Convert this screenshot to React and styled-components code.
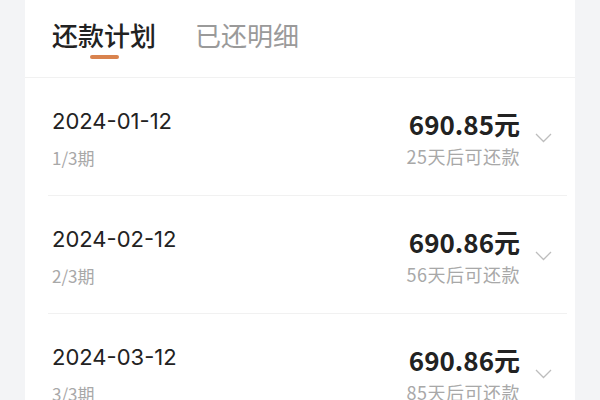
import React, { useState } from "react";
import styled, { createGlobalStyle } from "styled-components";

const GlobalStyle = createGlobalStyle`
  html, body {
    margin: 0;
    padding: 0;
    background: #f3f4f6;
    font-family: "Noto Sans CJK SC", "Noto Sans", sans-serif;
  }
`;

const Page = styled.div`
  width: 600px;
  height: 400px;
  overflow: hidden;
  padding: 0 25px;
  box-sizing: border-box;
`;

const Card = styled.div`
  background: #fff;
  height: 100%;
`;

const TabBar = styled.div`
  height: 78px;
  box-sizing: border-box;
  display: flex;
  gap: 39px;
  padding: 18px 0 0 27px;
  border-bottom: 1px solid #f1f1f1;
`;

const Tab = styled.div`
  display: flex;
  flex-direction: column;
  align-items: center;
  cursor: pointer;
  font-size: 26px;
  line-height: 34px;
  font-weight: ${({ active }) => (active ? 500 : 400)};
  color: ${({ active }) => (active ? "#222" : "#9a9a9a")};

  &::after {
    content: "";
    width: 29px;
    height: 4px;
    border-radius: 2px;
    margin-top: 3px;
    background: ${({ active }) => (active ? "#d9834e" : "transparent")};
  }
`;

const List = styled.div`
  padding: 0 8px 0 23px;
`;

const Row = styled.div`
  height: 118px;
  box-sizing: border-box;
  display: flex;
  align-items: center;
  padding: 0 15px 0 4px;
  border-bottom: 1px solid #f1f1f1;
`;

const Left = styled.div`
  flex: 1;
  display: flex;
  flex-direction: column;
  gap: 12px;
  margin-top: 3px;
`;

const DateText = styled.div`
  font-family: Inter, "Noto Sans CJK SC", sans-serif;
  font-size: 22px;
  line-height: 28px;
  color: #222;
`;

const SubText = styled.div`
  font-size: ${({ wide }) => (wide ? "18px" : "17px")};
  letter-spacing: ${({ wide }) => (wide ? "0.5px" : "0")};
  line-height: 22px;
  color: #a8a8a8;
`;

const Right = styled.div`
  display: flex;
  flex-direction: column;
  align-items: flex-end;
  gap: 5px;
  margin-top: 2px;
`;

const Amount = styled.div`
  font-size: 26px;
  line-height: 32px;
  font-weight: 700;
  color: #222;
`;

const Chevron = styled.svg`
  width: 17px;
  height: 10px;
  margin-left: 15px;
  margin-top: 2px;
`;

const plans = [
  { date: "2024-01-12", term: "1/3期", amount: "690.85", days: 25 },
  { date: "2024-02-12", term: "2/3期", amount: "690.86", days: 56 },
  { date: "2024-03-12", term: "3/3期", amount: "690.86", days: 85 },
];

export default function App() {
  const [tab, setTab] = useState(0);

  return (
    <>
      <GlobalStyle />
      <Page>
        <Card>
          <TabBar>
            {["还款计划", "已还明细"].map((t, i) => (
              <Tab key={t} active={tab === i} onClick={() => setTab(i)}>
                {t}
              </Tab>
            ))}
          </TabBar>
          <List>
            {plans.map((p) => (
              <Row key={p.date}>
                <Left>
                  <DateText>{p.date}</DateText>
                  <SubText>{p.term}</SubText>
                </Left>
                <Right>
                  <Amount>{p.amount}元</Amount>
                  <SubText wide>{p.days}天后可还款</SubText>
                </Right>
                <Chevron viewBox="0 0 17 10">
                  <polyline
                    points="1,1 8.5,8.5 16,1"
                    fill="none"
                    stroke="#bdbdbd"
                    strokeWidth="1.3"
                  />
                </Chevron>
              </Row>
            ))}
          </List>
        </Card>
      </Page>
    </>
  );
}
